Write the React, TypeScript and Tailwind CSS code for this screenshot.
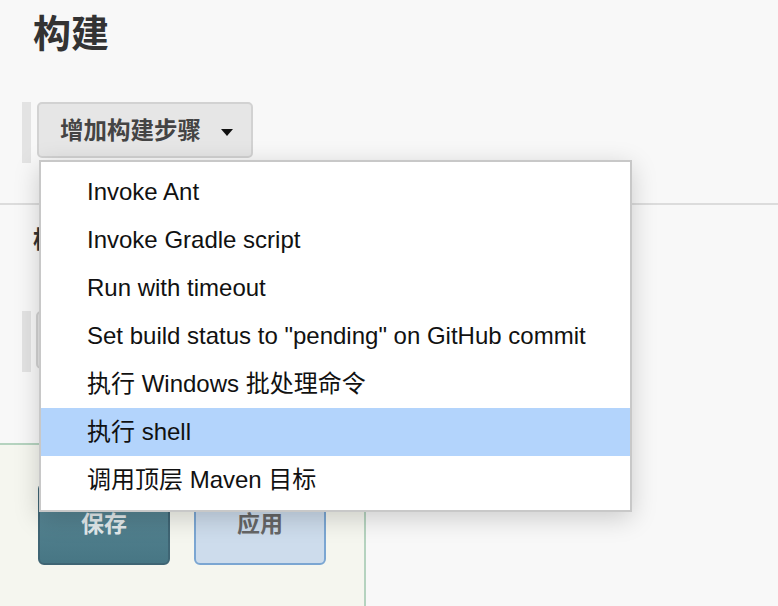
import React from 'react';

const FONT = '"Liberation Sans", "Noto Sans CJK SC", sans-serif';

const menuItems = [
  'Invoke Ant',
  'Invoke Gradle script',
  'Run with timeout',
  'Set build status to "pending" on GitHub commit',
  '执行 Windows 批处理命令',
  '执行 shell',
  '调用顶层 Maven 目标',
];

const SELECTED = 5;

export default function App() {
  return (
    <div
      className="relative w-[778px] h-[606px] overflow-hidden bg-[#f8f8f8] text-[#333]"
      style={{ fontFamily: FONT }}
    >
      {/* 构建 section */}
      <div className="pt-[10px] pl-[33px]">
        <h2 className="text-[38px] leading-[48px] font-bold text-[#333]">构建</h2>
      </div>

      <div className="mt-[44px] flex items-start pl-[22px]">
        <div className="w-[9px] h-[61px] bg-[#e3e3e3]" />
        <button className="ml-[6px] w-[216px] h-[56px] flex items-center pl-[21px] pt-[3px] rounded-[5px] border-2 border-[#d2d2d2] bg-[#e6e6e6] text-[23.5px] font-bold text-[#444]">
          增加构建步骤
          <span className="ml-[20px] mt-[1px] w-0 h-0 border-l-[6px] border-r-[6px] border-t-[7px] border-l-transparent border-r-transparent border-t-[#111]" />
        </button>
      </div>

      <div className="mt-[40px] h-[2px] bg-[#dcdcdc]" />

      {/* 构建后操作 section (mostly under the menu) */}
      <div className="pl-[33px] pt-[20px]">
        <h2 className="text-[24px] leading-[30px] font-bold text-[#333]">构建后操作</h2>
      </div>
      <div className="mt-[56px] flex items-start pl-[22px]">
        <div className="w-[9px] h-[61px] bg-[#e3e3e3]" />
        <div className="ml-[5px] w-[220px] h-[58px] rounded-[5px] border-2 border-[#d2d2d2] bg-[#e6e6e6]" />
      </div>

      {/* bottom action bar */}
      <div className="absolute left-0 top-[443px] w-[366px] h-[170px] bg-[#f5f6ef] border-t-2 border-r-2 border-[#b5d3bf] flex gap-[24px] pl-[38px] pt-[38px]">
        <button className="w-[132px] h-[82px] rounded-[6px] border-2 border-[#3f6574] bg-gradient-to-b from-[#5d8b99] to-[#477684] text-[23px] font-bold text-[#e2e9eb]">
          保存
        </button>
        <button className="w-[132px] h-[82px] rounded-[6px] border-2 border-[#7ba6d2] bg-[#cddcec] text-[23px] font-bold text-[#666]">
          应用
        </button>
      </div>

      {/* dropdown menu */}
      <div className="absolute left-[39px] top-[160px] w-[593px] border-2 border-[#c8c8c8] bg-white py-[6px] shadow-[0_6px_24px_rgba(0,0,0,0.18)]">
        {menuItems.map((label, i) => (
          <div
            key={label}
            className={`h-[48px] flex items-center pl-[46px] text-[24px] text-[#111] ${
              i === SELECTED ? 'bg-[#b3d4fc]' : ''
            }`}
          >
            {label}
          </div>
        ))}
      </div>
    </div>
  );
}
